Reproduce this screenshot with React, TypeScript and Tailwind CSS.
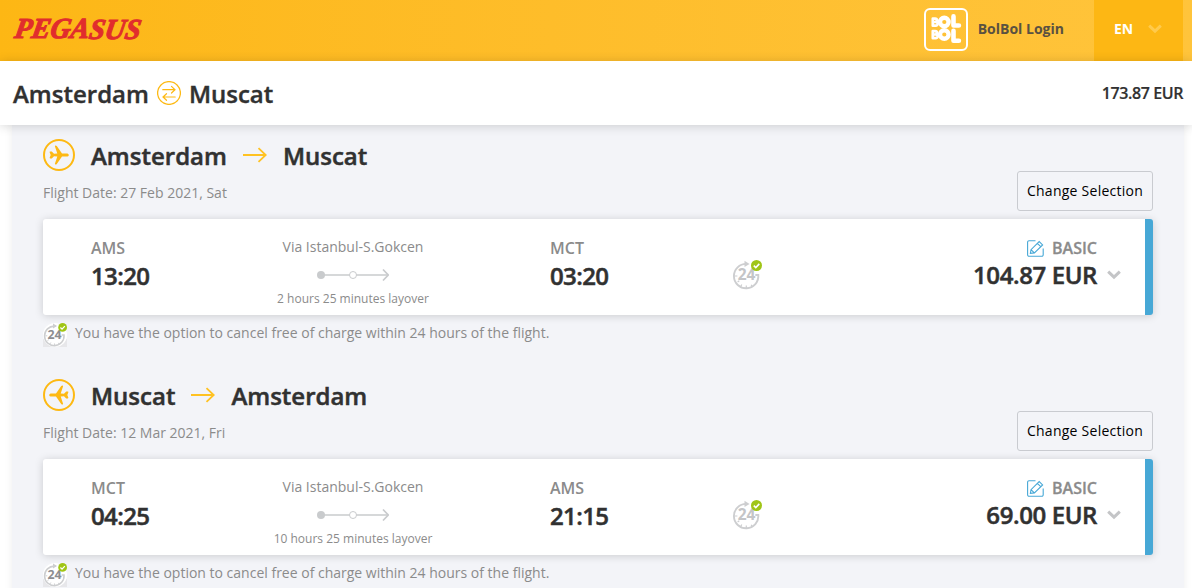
const legs = [
  {
    from: 'Amsterdam',
    to: 'Muscat',
    date: '27 Feb 2021, Sat',
    depCode: 'AMS',
    depTime: '13:20',
    arrCode: 'MCT',
    arrTime: '03:20',
    layover: '2 hours 25 minutes layover',
    price: '104.87 EUR',
    inbound: false,
  },
  {
    from: 'Muscat',
    to: 'Amsterdam',
    date: '12 Mar 2021, Fri',
    depCode: 'MCT',
    depTime: '04:25',
    arrCode: 'AMS',
    arrTime: '21:15',
    layover: '10 hours 25 minutes layover',
    price: '69.00 EUR',
    inbound: true,
  },
];

type Leg = (typeof legs)[number];

function PegasusLogo() {
  return (
    <svg width="150" height="44" viewBox="0 0 150 44" className="-mt-1">
      <text
        x="14"
        y="31.3"
        textLength="126"
        lengthAdjust="spacingAndGlyphs"
        transform="translate(5 0) skewX(-10)"
        fontFamily="'Liberation Serif', serif"
        fontSize="29"
        fontWeight="700"
        fontStyle="italic"
        fill="#e12d2d"
        stroke="#e12d2d"
        strokeWidth="1.1"
      >
        PEGA
        <tspan dy="1">SUS</tspan>
      </text>
    </svg>
  );
}

function BolBolLogo() {
  return (
    <svg width="44" height="43" viewBox="0 0 44 43" fill="none" stroke="#fff" className="-mt-[3px]">
      <rect x="1" y="1" width="42" height="41" rx="5" strokeWidth="2" />
      {[0, 12.5].map((dy) => (
        <g key={dy} transform={`translate(0 ${dy})`} strokeLinejoin="round" strokeLinecap="round">
          <path
            d="M8.8 10.6h2.4a1.6 1.6 0 0 1 0 3.4H8.8zM8.8 14h3a1.8 1.8 0 0 1 0 3.7h-3z"
            strokeWidth="2.7"
          />
          <circle cx="20.3" cy="14" r="4.3" strokeWidth="4.4" />
        </g>
      ))}
      <path d="M29.5 8.4v9.1h5.4M29.5 22.8v10h5.4" strokeWidth="4.6" strokeLinejoin="round" strokeLinecap="round" />
    </svg>
  );
}

function SwapIcon() {
  return (
    <svg width="24" height="24" viewBox="0 0 24 24" fill="none" stroke="#fdb913" strokeLinecap="round">
      <circle cx="12" cy="12" r="11.4" strokeWidth="1.3" />
      <path d="M5.8 8.7h12M14.5 5.4l3.5 3.3-3.5 3.3M18.2 16h-12M9.5 12.7L6 16l3.5 3.3" strokeWidth="1.2" />
    </svg>
  );
}

function PlaneIcon({ className }: { className: string }) {
  return (
    <svg width="20" height="20" viewBox="0 0 20 20" fill="currentColor" className={className}>
      <path d="M1.2 6.6h1.6L5 8.7l3.3-.2L5.9 1.3c-.2-.8 1-1.1 1.9-.2l5.2 7.3h4.5c1.4 0 2.3.7 2.3 1.6s-.9 1.6-2.3 1.6H13l-5.2 7.3c-.9.9-2.1.6-1.9-.2l2.4-7.2-3.3-.2-2.2 2.1H1.2c-.5 0-.6-.5-.5-.8L1.7 10 .7 7.4c-.1-.3 0-.8.5-.8z" />
    </svg>
  );
}

function Chevron({ className }: { className: string }) {
  return (
    <svg width="14" height="10" viewBox="0 0 14 10" fill="none" stroke="currentColor" strokeWidth="3" className={className}>
      <path d="M1.2 1.7L7 7.2l5.8-5.5" />
    </svg>
  );
}

function EditIcon() {
  return (
    <svg width="17" height="17" viewBox="0 0 17 17" fill="none" stroke="#47a8d6" strokeWidth="1.1">
      <path d="M8.5.8H2A1.4 1.4 0 0 0 .6 2.2v12.5a1.5 1.5 0 0 0 1.5 1.6h12.6a1.5 1.5 0 0 0 1.5-1.6V8.5" />
      <path d="M3.4 13.4l.6-3.7 8.2-8.2 3.4 3.4-8.2 8zM10.4 3.4l3.3 3.3M4 9.7l3.3 3.2" />
    </svg>
  );
}

function Cancel24({ size, dark }: { size: number; dark?: boolean }) {
  return (
    <svg width={size} height={size} viewBox="0 0 30 30" fill="none">
      {dark && <path d="M0 20v10h30V20z" fill="#e7e7ea" />}
      {dark && <circle cx="15" cy="15" r="15" fill="#fff" />}
      <path d="M16 3.9h-1.5A12.2 12.2 0 1 0 26.3 15h-3" stroke="#cdced0" strokeWidth="1.9" />
      <path d="M12.5.7l5.1 3.2-5.1 3.1" fill="#cdced0" />
      <path d="M3 16h2.4M5.6 22l1.7-1.2M9 26l.8-1.6M14.3 28v-2.4M20 26.5l-.8-1.7" stroke="#cdced0" strokeWidth="1.2" />
      <text
        x="14.5"
        y="20.4"
        textAnchor="middle"
        fontFamily="'Open Sans', sans-serif"
        fontWeight="700"
        fontSize="15.5"
        fill={dark ? '#8d8e91' : '#c4c5c7'}
      >
        24
      </text>
      <circle cx="24.5" cy="5.5" r="5.5" fill="#a0c516" />
      <path d="M21.8 5.6l2 2 3.5-3.7" stroke="#fff" strokeWidth="1.6" />
    </svg>
  );
}

function FlightLeg({ leg }: { leg: Leg }) {
  return (
    <section className="h-60 px-[31px] pt-3.5">
      <div className="flex h-20 justify-between">
        <div>
          <div className="flex h-8 items-center">
            <span className="flex size-8 items-center justify-center rounded-full border-2 border-[#fdb913]">
              <PlaneIcon className={leg.inbound ? '-scale-x-100 text-[#fdb913]' : 'text-[#fdb913]'} />
            </span>
            <h2 className="ml-4 flex items-center text-2xl font-semibold [-webkit-text-stroke:0.5px]">
              <span className="relative top-px">{leg.from}</span>
              <svg width="24" height="16" viewBox="0 0 24 16" className="mx-4" fill="none" stroke="#ffc222" strokeWidth="1.8">
                <path d="M0 8h22.5M15.5 1.2L22.7 8l-7.2 6.8" />
              </svg>
              <span className="relative top-px">{leg.to}</span>
            </h2>
          </div>
          <p className="mt-3 text-sm leading-5 text-[#8b8b8b]">Flight Date: {leg.date}</p>
        </div>
        <button className="mt-8 h-10 w-[136px] rounded-[3px] border border-[#c9cbd0] text-sm font-medium tracking-[0.25px] whitespace-nowrap text-black">
          Change Selection
        </button>
      </div>

      <div className="flex h-24 rounded-[3px] border-r-8 border-[#47a8d6] bg-white pl-12 shadow-[0_1px_8px_rgba(0,0,0,0.17)]">
        <div className="w-[166px] pt-[17px]">
          <div className="leading-6 font-semibold text-[#8b8b8b]">{leg.depCode}</div>
          <div className="text-2xl leading-8 font-semibold tracking-[-0.6px] [-webkit-text-stroke:0.5px]">{leg.depTime}</div>
        </div>
        <div className="flex w-48 flex-col items-center pt-[18px] text-[#8b8b8b]">
          <div className="text-sm leading-5">Via Istanbul-S.Gokcen</div>
          <svg width="72" height="14" viewBox="0 0 72 14" className="mt-[11px]" fill="none" stroke="#c9cbcd">
            <path d="M4 7h67" strokeWidth="1.7" />
            <path d="M66 1.5L71.2 7 66 12.5" strokeWidth="1.7" />
            <circle cx="4" cy="7" r="4" fill="#c9cbcd" stroke="none" />
            <circle cx="36" cy="7" r="3.5" fill="#fff" />
          </svg>
          <div className="mt-2 text-xs leading-[18px] whitespace-nowrap">{leg.layover}</div>
        </div>
        <div className="ml-[101px] w-[182px] pt-[17px]">
          <div className="leading-6 font-semibold text-[#8b8b8b]">{leg.arrCode}</div>
          <div className="text-2xl leading-8 font-semibold tracking-[-0.6px] [-webkit-text-stroke:0.5px]">{leg.arrTime}</div>
        </div>
        <div className="pt-[41px]">
          <Cancel24 size={30} />
        </div>
        <div className="flex-1 pt-[17px] pr-12 text-right">
          <div className="flex items-center justify-end gap-2 leading-6 font-semibold text-[#8b8b8b] [-webkit-text-stroke:0.3px]">
            <EditIcon />
            BASIC
          </div>
          <div className="-mt-px -mr-6 flex items-center justify-end text-2xl leading-8 font-semibold tracking-[-0.4px] [-webkit-text-stroke:0.5px]">
            {leg.price}
            <Chevron className="ml-2.5 text-[#c4c5c7]" />
          </div>
        </div>
      </div>

      <div className="mt-2 flex h-6 gap-2 text-sm leading-5 text-[#8b8b8b]">
        <Cancel24 size={24} dark />
        <span>You have the option to cancel free of charge within 24 hours of the flight.</span>
      </div>
    </section>
  );
}

export default function App() {
  return (
    <div className="h-[588px] w-[1192px] overflow-hidden bg-white font-['Open_Sans',sans-serif] text-[#313131]">
      <header className="flex h-[61px] items-center justify-between bg-linear-to-r from-[#fdb714] to-[#ffc43b]">
        <PegasusLogo />
        <div className="flex h-full items-center">
          <BolBolLogo />
          <span className="mr-[30px] mb-1 ml-2.5 text-sm font-bold text-[#5a5141]">BolBol Login</span>
          <div className="mr-[9px] flex h-full w-[89px] items-center bg-[#fdb714] pb-[3px] pl-5 text-sm font-bold text-white">
            EN
            <Chevron className="ml-[15px] text-[#ffca4c]" />
          </div>
        </div>
      </header>

      <div className="relative flex h-16 items-center justify-between bg-white pr-[9px] pl-[13px] shadow-[0_1px_10px_rgba(0,0,0,0.17)]">
        <h1 className="flex items-center gap-2 text-2xl font-semibold [-webkit-text-stroke:0.4px]">
          <span className="relative top-px">Amsterdam</span>
          <SwapIcon />
          <span className="relative top-px">Muscat</span>
        </h1>
        <span className="font-semibold tracking-[-0.4px] [-webkit-text-stroke:0.2px]">173.87 EUR</span>
      </div>

      <main className="mr-2 ml-3 bg-[#f3f4f8] shadow-[0_0_8px_rgba(0,0,0,0.07)]">
        {legs.map((leg) => (
          <FlightLeg key={leg.from} leg={leg} />
        ))}
      </main>
    </div>
  );
}
